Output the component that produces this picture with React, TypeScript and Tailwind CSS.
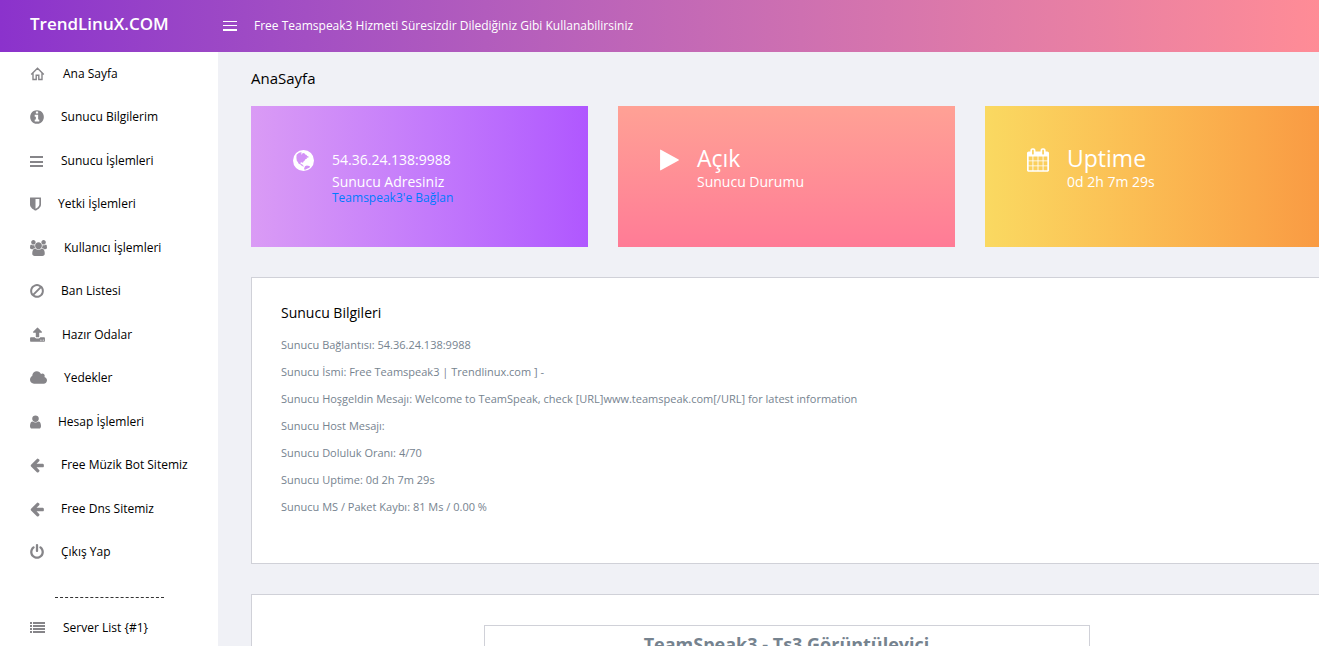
import type { ReactNode } from 'react';

type IconProps = { box: string; className: string; children: ReactNode };

function Icon({ box, className, children }: IconProps) {
  return (
    <svg viewBox={box} className={`shrink-0 ${className}`} fill="currentColor" aria-hidden="true">
      {children}
    </svg>
  );
}

const HomeIcon = () => (
  <Icon box="0 0 16 16" className="h-4 w-4">
    <path
      d="M1.2 8.600 7.500 2.300 13.800 8.600M3 7.200V13.500H6.200V9.300H8.800V13.500H12V7.200"
      fill="none"
      stroke="currentColor"
      strokeWidth="1.4"
    />
  </Icon>
);

const InfoIcon = () => (
  <Icon box="128 0 1536 1792" className="h-4 w-3.5">
    <path d="M1152 1376v-160q0-14-9-23t-23-9h-96v-512q0-14-9-23t-23-9h-320q-14 0-23 9t-9 23v160q0 14 9 23t23 9h96v320h-96q-14 0-23 9t-9 23v160q0 14 9 23t23 9h448q14 0 23-9t9-23zm-128-896v-160q0-14-9-23t-23-9h-192q-14 0-23 9t-9 23v160q0 14 9 23t23 9h192q14 0 23-9t9-23zm640 416q0 209-103 385.5t-279.5 279.5-385.5 103-385.5-103-279.5-279.5-103-385.5 103-385.5 279.5-279.5 385.5-103 385.5 103 279.5 279.5 103 385.5z" />
  </Icon>
);

const BarsIcon = () => (
  <Icon box="0 0 14 16" className="h-4 w-3.5">
    <path d="M0 3h13v2H0zM0 8h13v2H0zM0 12h13v2H0z" />
  </Icon>
);

const ShieldIcon = () => (
  <Icon box="256 0 1280 1792" className="h-4 w-[11px]">
    <path d="M1344 960v-640h-448v1137q119-63 213-137 235-184 235-360zm192-768v768q0 86-33.5 170.5t-83 150-118 127.5-126.5 103-121 77.5-89.5 49.5-42.5 20q-12 6-26 6t-26-6q-16-7-42.5-20t-89.5-49.5-121-77.5-126.5-103-118-127.5-83-150-33.5-170.5v-768q0-26 19-45t45-19h1152q26 0 45 19t19 45z" />
  </Icon>
);

const UsersIcon = () => (
  <Icon box="64 0 1920 1792" className="h-4 w-[17px]">
    <path d="M657 896q-162 5-265 128h-134q-82 0-138-40.5t-56-118.5q0-353 124-353 6 0 43.5 21t97.5 42.5 119 21.5q67 0 133-23-5 37-5 66 0 139 81 256zm1071 637q0 120-73 189.5t-194 69.5h-874q-121 0-194-69.5t-73-189.5q0-53 3.5-103.5t14-109 26.5-108.5 43-97.5 62-81 85.5-53.5 111.5-20q10 0 43 21.5t73 48 107 48 135 21.5 135-21.5 107-48 73-48 43-21.5q61 0 111.5 20t85.5 53.5 62 81 43 97.5 26.5 108.5 14 109 3.5 103.5zm-1024-1277q0 106-75 181t-181 75-181-75-75-181 75-181 181-75 181 75 75 181zm704 384q0 159-112.5 271.5t-271.5 112.5-271.5-112.5-112.5-271.5 112.5-271.5 271.5-112.5 271.5 112.5 112.5 271.5zm576 225q0 78-56 118.5t-138 40.5h-134q-103-123-265-128 81-117 81-256 0-29-5-66 66 23 133 23 59 0 119-21.5t97.5-42.5 43.5-21q124 0 124 353zm-128-609q0 106-75 181t-181 75-181-75-75-181 75-181 181-75 181 75 75 181z" />
  </Icon>
);

const BanIcon = () => (
  <Icon box="128 0 1536 1792" className="h-4 w-3.5">
    <path d="M1440 893q0-161-87-295l-754 753q137 89 297 89 111 0 211.5-43.5t173.5-116.5 116-174.5 43-212.5zm-999 299l755-754q-135-91-300-91-148 0-273 73t-198 199-73 274q0 162 89 299zm1223-299q0 157-61 300t-163.5 246-245 164-298.5 61-298.5-61-245-164-163.5-246-61-300 61-299.5 163.5-245.5 245-164 298.5-61 298.5 61 245 164 163.5 245.5 61 299.5z" />
  </Icon>
);

const UploadIcon = () => (
  <Icon box="64 0 1664 1792" className="h-4 w-[15px]">
    <path d="M1344 1472q0-26-19-45t-45-19-45 19-19 45 19 45 45 19 45-19 19-45zm256 0q0-26-19-45t-45-19-45 19-19 45 19 45 45 19 45-19 19-45zm128-224v320q0 40-28 68t-68 28h-1472q-40 0-68-28t-28-68v-320q0-40 28-68t68-28h427q21 56 70.5 92t110.5 36h256q61 0 110.5-36t70.5-92h427q40 0 68 28t28 68zm-325-648q-17 40-59 40h-256v448q0 26-19 45t-45 19h-256q-26 0-45-19t-19-45v-448h-256q-42 0-59-40-17-39 14-69l448-448q18-19 45-19t45 19l448 448q31 30 14 69z" />
  </Icon>
);

const CloudIcon = () => (
  <Icon box="0 0 1920 1792" className="h-4 w-[17px]">
    <path d="M1920 1152q0 159-112.5 271.5t-271.5 112.5h-1088q-185 0-316.5-131.5t-131.5-316.5q0-132 71-241.5t187-163.5q-2-28-2-43 0-212 150-362t362-150q158 0 286.5 88t187.5 230q70-62 166-62 106 0 181 75t75 181q0 75-41 138 129 30 213 134.5t84 239.5z" />
  </Icon>
);

const UserIcon = () => (
  <Icon box="256 0 1280 1792" className="h-4 w-[11px]">
    <path d="M1536 1399q0 109-62.5 187t-150.5 78h-854q-88 0-150.5-78t-62.5-187q0-85 8.5-160.5t31.5-152 58.5-131 94-89 134.5-34.5q131 128 313 128t313-128q76 0 134.5 34.5t94 89 58.5 131 31.5 152 8.5 160.5zm-256-887q0 159-112.5 271.5t-271.5 112.5-271.5-112.5-112.5-271.5 112.5-271.5 271.5-112.5 271.5 112.5 112.5 271.5z" />
  </Icon>
);

const ArrowLeftIcon = () => (
  <Icon box="128 0 1536 1792" className="h-4 w-3.5">
    <path d="M1664 896v128q0 53-32.5 90.5t-84.5 37.5h-704l293 294q38 36 38 90t-38 90l-75 76q-37 37-90 37-52 0-91-37l-651-652q-37-37-37-90 0-52 37-91l651-650q38-38 91-38 52 0 90 38l75 74q38 38 38 91t-38 91l-293 293h704q52 0 84.5 37.5t32.5 90.5z" />
  </Icon>
);

const PowerIcon = () => (
  <Icon box="128 0 1536 1792" className="h-4 w-3.5">
    <path d="M1664 896q0 156-61 298t-164 245-245 164-298 61-298-61-245-164-164-245-61-298q0-182 80.5-343t226.5-270q43-32 95.5-25t83.5 50q32 42 24.5 94.5t-49.5 84.5q-98 74-151.5 181t-53.5 228q0 104 40.5 198.5t109.5 163.5 163.5 109.5 198.5 40.5 198.5-40.5 163.5-109.5 109.5-163.5 40.5-198.5q0-121-53.5-228t-151.5-181q-42-32-49.5-84.5t24.5-94.5q31-43 84-50t95 25q146 109 226.5 270t80.5 343zm-640-768v640q0 52-38 90t-90 38-90-38-38-90v-640q0-52 38-90t90-38 90 38 38 90z" />
  </Icon>
);

const ListIcon = () => (
  <Icon box="0 0 16 16" className="h-4 w-4">
    <path d="M0 2h2v2H0zM0 5h2v2H0zM0 8h2v2H0zM0 11h2v2H0zM3 2h12v2H3zM3 5h12v2H3zM3 8h12v2H3zM3 11h12v2H3z" />
  </Icon>
);

const GlobeIcon = () => (
  <Icon box="0 0 21 21" className="size-[21px]">
    <path
      fillRule="evenodd"
      d="M10.500 0a10.500 10.500 0 1 0 0 21 10.500 10.500 0 0 0 0-21zM3.600 4.800 6 2.700 8 2.200l1 .9-1.300.8 1.100.5 1-1.500 1.600.3.9 1.300 1 .2.9 1.400 1.600.6-.7 1-1.500-.2.300 1.200-1.500.5-.9 1.500-1.200 1-.3 1.300-1-.8-1.500.4.2 1.400 1.500.2.600 1.300 1.200.4-.3.7-1.700-.5-1.500-1.500-1.800-.9-.9-1.800-1-1.100-.4-3zM12 16.200l1.800-.7 2.600.4.8 1-1.500 1.200-2.200 1-1.800.8-.6-1.300z"
    />
  </Icon>
);

const PlayIcon = () => (
  <Icon box="192 0 1408 1792" className="h-6 w-[19px]">
    <path d="M1576 927l-1328 738q-23 13-39.5 3t-16.5-36v-1472q0-26 16.5-36t39.5 3l1328 738q23 13 23 31t-23 31z" />
  </Icon>
);

const CalendarIcon = () => (
  <Icon box="64 0 1664 1792" className="h-6 w-[22px]">
    <path d="M192 1664h288v-288h-288v288zm352 0h320v-288h-320v288zm-352-352h288v-320h-288v320zm352 0h320v-320h-320v320zm-352-384h288v-288h-288v288zm736 736h320v-288h-320v288zm-384-736h320v-288h-320v288zm768 736h288v-288h-288v288zm-384-352h320v-320h-320v320zm-352-864v-288q0-13-9.5-22.5t-22.5-9.5h-64q-13 0-22.5 9.5t-9.5 22.5v288q0 13 9.5 22.5t22.5 9.5h64q13 0 22.5-9.5t9.5-22.5zm736 864h288v-320h-288v320zm-384-384h320v-288h-320v288zm384 0h288v-288h-288v288zm32-480v-288q0-13-9.5-22.5t-22.5-9.5h-64q-13 0-22.5 9.5t-9.5 22.5v288q0 13 9.5 22.5t22.5 9.5h64q13 0 22.5-9.5t9.5-22.5zm384-64v1280q0 52-38 90t-90 38h-1408q-52 0-90-38t-38-90v-1280q0-52 38-90t90-38h128v-96q0-66 47-113t113-47h64q66 0 113 47t47 113v96h384v-96q0-66 47-113t113-47h64q66 0 113 47t47 113v96h128q52 0 90 38t38 90z" />
  </Icon>
);

const menu = [
  { label: 'Ana Sayfa', icon: <HomeIcon /> },
  { label: 'Sunucu Bilgilerim', icon: <InfoIcon /> },
  { label: 'Sunucu İşlemleri', icon: <BarsIcon /> },
  { label: 'Yetki İşlemleri', icon: <ShieldIcon /> },
  { label: 'Kullanıcı İşlemleri', icon: <UsersIcon /> },
  { label: 'Ban Listesi', icon: <BanIcon /> },
  { label: 'Hazır Odalar', icon: <UploadIcon /> },
  { label: 'Yedekler', icon: <CloudIcon /> },
  { label: 'Hesap İşlemleri', icon: <UserIcon /> },
  { label: 'Free Müzik Bot Sitemiz', icon: <ArrowLeftIcon /> },
  { label: 'Free Dns Sitemiz', icon: <ArrowLeftIcon /> },
  { label: 'Çıkış Yap', icon: <PowerIcon /> },
];

const info = [
  { label: 'Sunucu Bağlantısı:', value: '54.36.24.138:9988' },
  { label: 'Sunucu İsmi:', value: 'Free Teamspeak3 | Trendlinux.com ] -' },
  {
    label: 'Sunucu Hoşgeldin Mesajı:',
    value: 'Welcome to TeamSpeak, check [URL]www.teamspeak.com[/URL] for latest information',
  },
  { label: 'Sunucu Host Mesajı:', value: '' },
  { label: 'Sunucu Doluluk Oranı:', value: '4/70' },
  { label: 'Sunucu Uptime:', value: '0d 2h 7m 29s' },
  { label: 'Sunucu MS / Paket Kaybı:', value: '81 Ms / 0.00 %' },
];

function MenuLink({ label, icon }: { label: string; icon: ReactNode }) {
  return (
    <a href="#" className="flex items-center gap-[17px] pl-[30px] text-xs font-medium text-black">
      <span className="text-[#868589]">{icon}</span>
      {label}
    </a>
  );
}

function Header() {
  return (
    <header className="flex h-13 items-center bg-linear-to-r from-[#8b32cc] to-[#ff8c96] text-white">
      <a href="#" className="w-[223px] pb-1 pl-[30px] text-[17px] font-semibold">
        TrendLinuX.COM
      </a>
      <button type="button" aria-label="Menu" className="flex w-3.5 flex-col gap-[3px]">
        <span className="h-px w-full bg-white" />
        <span className="h-px w-full bg-white" />
        <span className="h-0.5 w-full bg-white" />
      </button>
      <p className="pl-[17px] text-xs">Free Teamspeak3 Hizmeti Süresizdir Dilediğiniz Gibi Kullanabilirsiniz</p>
    </header>
  );
}

function Sidebar() {
  return (
    <nav className="w-[218px] shrink-0 bg-white">
      <ul className="grid h-[522px] auto-rows-fr">
        {menu.map((item) => (
          <li key={item.label} className="grid">
            <MenuLink {...item} />
          </li>
        ))}
      </ul>
      <hr className="mt-[23px] ml-[55px] w-[109px] border-dashed border-[#333]" />
      <div className="mt-2 grid h-11">
        <MenuLink label="Server List {#1}" icon={<ListIcon />} />
      </div>
    </nav>
  );
}

function Card({ icon, className, children }: { icon: ReactNode; className: string; children: ReactNode }) {
  return (
    <div className={`flex h-[141px] gap-[18px] px-[42px] pt-9 text-white ${className}`}>
      <div className="flex h-9 items-center">{icon}</div>
      <div>{children}</div>
    </div>
  );
}

function App() {
  return (
    <div className="flex h-screen flex-col overflow-hidden bg-[#f0f1f6] font-['Open_Sans','Noto_Sans',sans-serif]">
      <Header />
      <div className="flex min-h-0 flex-1">
        <Sidebar />
        <main className="-mr-[3px] min-w-0 flex-1 pl-[33px]">
          <h1 className="pt-3.5 text-[15px] leading-6 font-medium text-black">AnaSayfa</h1>

          <section className="mt-4 grid grid-cols-3 gap-[30px]">
            <Card icon={<GlobeIcon />} className="bg-linear-to-r from-[#da9bf5] to-[#b057ff]">
              <p className="pt-1 text-sm leading-7">54.36.24.138:9988</p>
              <p className="text-sm leading-4">Sunucu Adresiniz</p>
              <a href="#" className="block text-xs leading-4 font-medium text-[#007bff]">
                Teamspeak3'e Bağlan
              </a>
            </Card>
            <Card icon={<PlayIcon />} className="bg-linear-to-b from-[#ffa195] to-[#ff7b96]">
              <p className="text-[23px] leading-8">Açık</p>
              <p className="text-sm leading-4">Sunucu Durumu</p>
            </Card>
            <Card icon={<CalendarIcon />} className="bg-linear-to-r from-[#fad961] to-[#f99a43]">
              <p className="text-[23px] leading-8">Uptime</p>
              <p className="text-sm leading-4">0d 2h 7m 29s</p>
            </Card>
          </section>

          <section className="mt-[30px] border border-[#d0d1d8] bg-white px-[29px] pt-[23px] pb-[43px]">
            <h2 className="text-sm leading-6 font-medium text-black">Sunucu Bilgileri</h2>
            <div className="mt-1.5 text-[11px] leading-[27px] text-[#76838f]">
              {info.map(({ label, value }) => (
                <p key={label}>
                  <span className="font-medium">{label}</span> {value}
                </p>
              ))}
            </div>
          </section>

          <section className="mt-[30px] flex justify-center border border-[#d0d1d8] bg-white pt-[30px] pb-10">
            <div className="w-[606px] border border-[#d0d1d8] pt-1 pb-10">
              <h2 className="text-center text-lg leading-7 font-bold text-[#76838f]">
                TeamSpeak3 - Ts3 Görüntüleyici
              </h2>
            </div>
          </section>
        </main>
      </div>
    </div>
  );
}

export default App;
